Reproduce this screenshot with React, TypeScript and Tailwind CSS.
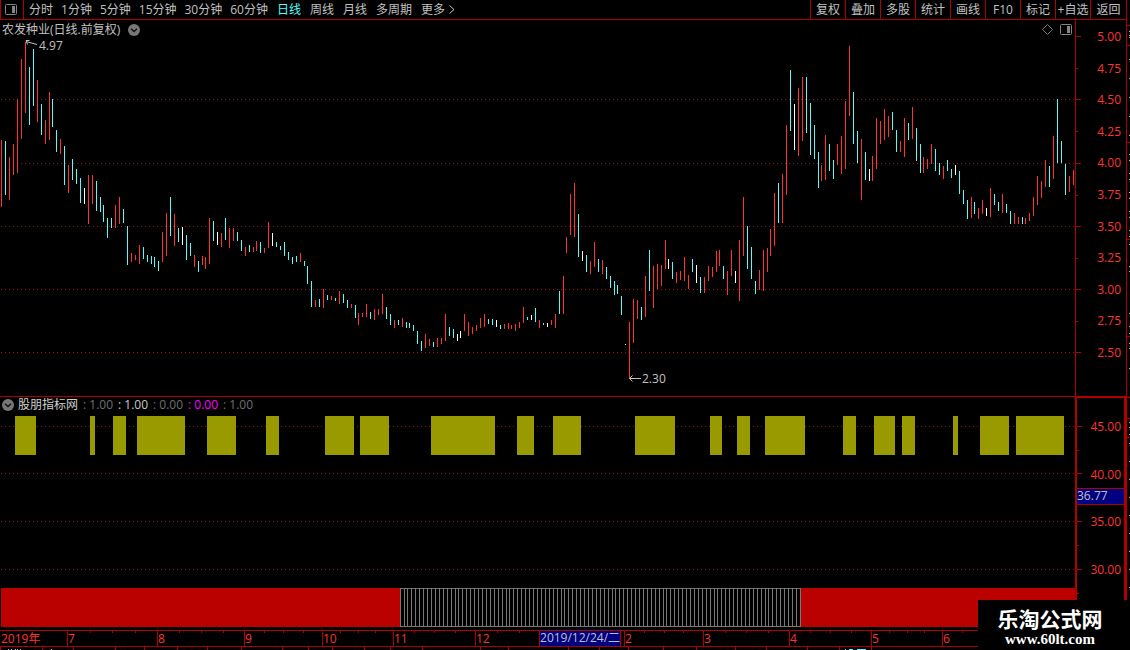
import React, { useState } from "react";
import clsx from "clsx";

type Tone = "r" | "c" | "w";

const TONES: Record<Tone, string> = { r: "#ff3232", c: "#54fcfc", w: "#ffffff" };

// x, high, low, tone
const CANDLES = `
1 140 207 r,5 141 195 c,9 157 200 r,13 144 175 r,17 99 173 r,21 59 139 r,25 42 113 r,29 67 125 c,33 49 106 c,37 80 122 r,
41 104 135 c,45 120 144 r,49 92 140 r,52 99 127 c,56 130 152 c,60 139 154 r,64 146 185 c,68 165 193 r,72 159 180 c,76 169 184 c,
80 178 203 c,84 188 204 w,88 175 224 r,92 175 204 r,96 181 211 c,100 197 212 c,103 205 222 c,107 218 238 c,111 218 228 c,115 205 228 r,
119 197 224 r,123 209 223 c,127 226 265 c,131 253 262 r,135 255 260 r,139 245 264 r,143 247 259 c,147 255 262 c,151 256 264 c,154 257 267 c,
158 261 271 c,162 232 262 r,166 213 256 r,170 197 236 c,174 214 246 r,178 228 242 c,182 227 245 w,186 235 260 c,190 243 256 c,194 255 267 r,
198 261 272 c,202 256 265 r,205 257 269 r,209 218 264 r,213 221 241 c,217 232 245 w,221 233 247 r,225 218 240 c,229 228 248 r,233 228 241 r,
237 232 241 c,241 240 251 c,245 247 256 r,249 245 252 c,253 247 252 r,256 241 251 r,260 242 253 c,264 248 253 r,268 222 248 r,272 233 246 w,
276 242 247 c,280 246 250 c,284 242 256 c,288 252 260 c,292 257 264 c,296 256 262 c,300 253 262 r,304 261 266 c,307 266 284 c,311 281 307 c,
315 300 307 r,319 299 307 c,323 289 308 r,327 295 300 c,331 296 300 r,335 298 301 c,339 291 304 r,343 294 303 c,347 300 308 c,351 304 308 r,
355 305 318 c,358 313 325 r,362 313 317 r,366 304 317 r,370 312 319 c,374 309 320 r,378 309 315 r,382 294 314 r,386 307 319 c,390 314 325 c,
394 320 328 r,398 320 325 c,402 318 327 r,406 322 328 c,409 323 328 c,413 325 331 c,417 331 344 c,421 341 351 c,425 334 348 r,429 339 346 r,
433 342 347 c,437 338 347 r,441 338 344 r,445 314 341 r,449 327 336 c,453 329 338 c,457 334 341 w,460 331 338 w,464 314 331 r,468 322 336 r,
472 327 334 r,476 325 331 r,480 318 328 r,484 314 327 r,488 319 324 c,492 319 325 c,496 320 327 w,500 325 329 c,504 324 329 r,508 323 329 r,
511 325 329 r,515 324 331 r,519 322 328 r,523 307 323 r,527 317 320 c,531 315 320 w,535 308 322 c,539 320 328 r,543 323 325 c,547 323 327 w,
551 320 325 r,555 314 328 r,559 291 314 c,563 276 314 r,566 237 253 r,570 194 235 r,574 183 237 r,578 214 257 c,582 251 261 w,586 255 272 c,
590 261 274 r,594 242 267 r,598 259 272 c,602 260 274 r,606 267 279 c,610 276 288 c,614 281 295 c,617 285 294 c,621 296 315 c,625 344 345 w,
629 322 378 r,633 299 343 r,637 300 319 r,641 307 320 c,645 276 317 r,649 250 291 c,653 266 308 r,657 264 289 r,661 265 286 r,665 240 269 r,
668 259 269 w,672 262 279 c,676 272 283 r,680 271 280 r,684 257 281 r,688 275 289 r,692 259 272 c,696 265 283 w,700 277 293 c,704 277 293 r,
708 266 281 r,712 267 277 r,716 251 272 r,719 250 266 r,723 266 279 c,727 271 295 r,731 250 276 r,735 271 283 w,739 240 301 r,743 197 256 r,
747 226 269 c,751 247 279 c,755 281 294 c,759 270 290 r,763 250 291 r,767 248 272 r,770 229 256 r,774 193 246 r,778 183 223 c,782 174 223 r,
786 125 195 r,790 70 131 c,794 104 150 w,798 88 156 r,802 77 141 r,806 77 133 c,810 103 155 c,814 125 159 c,818 152 188 c,821 165 181 r,
825 135 180 r,829 144 171 c,833 160 179 c,837 144 165 r,841 136 174 r,845 101 169 r,849 46 116 r,853 92 144 c,857 131 163 c,861 139 200 r,
865 152 180 c,869 169 181 w,872 156 181 r,876 118 169 r,880 121 144 r,884 109 140 r,888 116 137 r,892 112 130 c,896 130 152 c,900 141 152 r,
904 118 157 r,908 123 140 c,912 107 139 r,916 128 161 c,920 144 173 c,923 157 173 r,927 159 169 r,931 144 164 r,935 149 171 c,939 163 175 c,
943 166 179 r,947 160 171 c,951 169 178 c,955 165 175 w,959 171 194 c,963 190 204 c,967 200 219 c,971 197 218 r,974 202 214 c,978 208 219 r,
982 200 214 r,986 208 216 w,990 188 217 r,994 194 205 c,998 202 211 c,1002 194 213 r,1006 204 213 c,1010 211 224 c,1014 213 224 r,1018 217 224 r,
1022 217 224 c,1025 218 224 r,1029 213 221 r,1033 197 216 r,1037 176 205 r,1041 181 198 r,1045 160 187 r,1049 166 187 c,1053 136 179 r,1057 99 163 c,
1061 141 163 c,1065 164 195 c,1069 176 192 r,1073 170 185 r`
  .trim()
  .split(",")
  .map((row) => {
    const [x, high, low, tone] = row.trim().split(" ");
    return { x: +x, high: +high, low: +low, tone: tone as Tone };
  });

// start, end
const SIGNALS = [
  [15, 36], [90, 95], [113, 126], [137, 185], [207, 236], [266, 279], [325, 354],
  [360, 389], [431, 495], [517, 534], [553, 581], [635, 675], [710, 722], [737, 750],
  [765, 805], [843, 856], [874, 895], [902, 915], [953, 958], [980, 1009], [1016, 1064],
];

const MINUTE_TABS = ["分时", "1分钟", "5分钟", "15分钟", "30分钟", "60分钟"];
const PERIOD_TABS = ["日线", "周线", "月线", "多周期", "更多"];
const TOOLS = ["复权", "叠加", "多股", "统计", "画线", "F10", "标记", "+自选"];

const PRICES = ["5.00", "4.75", "4.50", "4.25", "4.00", "3.75", "3.50", "3.25", "3.00", "2.75", "2.50"];
const PRICE_MAJOR = [36, 99, 163, 226, 289, 352];
const PRICE_MINOR = [68, 131, 195, 258, 321];
const LEVELS = ["45.00", "40.00", "35.00", "30.00"];
const LEVEL_MAJOR = [426, 473, 521, 569];
const LEVEL_MINOR = [450, 545, 593];

const VALUES = [
  { text: "1.00", color: "text-[#707070]" },
  { text: "1.00", color: "text-[#c8c8c8]" },
  { text: "0.00", color: "text-[#707070]" },
  { text: "0.00", color: "text-[#ff00ff]" },
  { text: "1.00", color: "text-[#707070]" },
];

const AXIS_WIDTH = 1126;
const MONTHS = [
  { label: "2019年", width: 67 },
  { label: "7", width: 90 },
  { label: "8", width: 87 },
  { label: "9", width: 78 },
  { label: "10", width: 71 },
  { label: "11", width: 82 },
  { label: "12", width: 149 },
  { label: "2", width: 79 },
  { label: "3", width: 86 },
  { label: "4", width: 82 },
  { label: "5", width: 71 },
  { label: "6", width: 184 },
];
const WEEK_TICKS = [
  90, 112, 135, 179, 201, 223, 264, 283, 303, 340, 358, 375, 414, 434, 455, 497, 519,
  644, 664, 683, 725, 746, 768, 810, 830, 851, 889, 907, 924, 962,
];
const FOOT_TICKS = [
  0, 42, 73, 115, 144, 177, 207, 241, 282, 308, 332, 364, 390, 422, 480, 508, 568, 599,
  628, 663, 696, 735, 766, 807, 839, 871,
];

const EDGE_LINES = [25, 45, 142, 239, 336, 397, 418, 437];
const EDGE_DOTS = [
  31, 35, 37, 59, 78, 97, 116, 135, 154, 160, 173, 179, 192, 198, 211, 217, 230, 236, 244,
  266, 271, 313, 326, 333, 343, 348, 368, 422, 427, 434, 443, 461, 479, 497, 515, 533,
  551, 569, 587,
];

function PanelIcon() {
  return (
    <svg className="shrink-0" width="12" height="11" viewBox="0 0 12 11" aria-hidden="true">
      <rect x="0.5" y="0.5" width="11" height="10" rx="1" fill="none" stroke="#858585" />
      <rect x="7" y="2" width="3" height="7" fill="#858585" />
    </svg>
  );
}

function RoundChevron() {
  return (
    <svg width="12" height="12" viewBox="0 0 12 12" aria-hidden="true">
      <circle cx="6" cy="6" r="6" fill="#777777" />
      <path d="M3 4.8 6 7.6 9 4.8" fill="none" stroke="#101010" strokeWidth="1.4" />
    </svg>
  );
}

function GridLine({ y }: { y: number }) {
  return <line x1="1" x2="1075" y1={y + 0.5} y2={y + 0.5} stroke="#a01010" strokeDasharray="1 3" />;
}

function AxisTicks({ major, minor, top, height }: { major: number[]; minor: number[]; top: number; height: number }) {
  return (
    <svg
      className="w-[5px] shrink-0"
      height={height}
      viewBox={`0 ${top} 5 ${height}`}
      shapeRendering="crispEdges"
      fill="#b00000"
      aria-hidden="true"
    >
      {major.map((y) => <rect key={y} x="0" y={y} width="5" height="1" />)}
      {minor.map((y) => <rect key={y} x="0" y={y} width="2" height="1" />)}
    </svg>
  );
}

function Header() {
  const [active, setActive] = useState("日线");

  const tab = (label: string) => (
    <button
      key={label}
      onClick={() => setActive(label)}
      className={clsx("whitespace-nowrap", active === label ? "text-[#54fcfc]" : "text-[#c0c0c0]")}
    >
      {label}
    </button>
  );

  return (
    <header className="flex h-5 border-b border-l border-[#b00000]">
      <button aria-label="侧栏" className="flex w-[23px] items-center justify-center border-r border-[#b00000] pr-0.5">
        <PanelIcon />
      </button>
      <nav className="flex flex-1 items-center pl-[5px]">
        <div className="flex gap-2">{MINUTE_TABS.map(tab)}</div>
        <div className="ml-[9px] flex items-center gap-[9px]">{PERIOD_TABS.map(tab)}</div>
        <svg className="ml-1" width="6" height="9" viewBox="0 0 6 9" aria-hidden="true">
          <path d="M0.5 0.5 5 4.5 0.5 8.5" fill="none" stroke="#c0c0c0" />
        </svg>
      </nav>
      <div className="flex">
        {TOOLS.map((label) => (
          <button key={label} className="w-[35px] border-l border-[#b00000] whitespace-nowrap">
            {label}
          </button>
        ))}
        <button className="w-9 border-l border-[#b00000]">返回</button>
      </div>
    </header>
  );
}

function PriceChart() {
  return (
    <section className="flex border-b border-[#b00000]">
      <div className="min-w-0 flex-1">
        <div className="flex h-5 items-center pr-[3px] pb-px pl-0.5">
          <h1>农发种业(日线.前复权)</h1>
          <button aria-label="展开" className="ml-2"><RoundChevron /></button>
          <div className="ml-auto flex items-center gap-[7px]">
            <svg width="11" height="11" viewBox="0 0 11 11" aria-hidden="true">
              <path d="M5.5 0.5 10.5 5.5 5.5 10.5 0.5 5.5Z" fill="none" stroke="#777777" />
            </svg>
            <button aria-label="面板"><PanelIcon /></button>
          </div>
        </div>
        <svg className="block h-[356px] w-full overflow-visible" viewBox="0 40 1075 356" preserveAspectRatio="none">
          <g shapeRendering="crispEdges">
            {PRICE_MAJOR.slice(1).map((y) => <GridLine key={y} y={y} />)}
            {CANDLES.map((c) => (
              <rect key={c.x} x={c.x} y={c.high} width="1" height={c.low - c.high} fill={TONES[c.tone]} />
            ))}
          </g>
          <g fill="none" stroke="#c0c0c0">
            <path d="M26 41.5 37 44.5M29.5 40.5H26L27.5 44.5" />
            <path d="M629 378.5H641M632.5 375.5 629.5 378.5 632.5 381.5" />
          </g>
          <g fill="#c0c0c0" fontSize="12">
            <text x="39" y="50">4.97</text>
            <text x="642" y="383">2.30</text>
          </g>
        </svg>
      </div>
      <div className="flex w-[51px] border-l border-[#b00000]">
        <AxisTicks major={PRICE_MAJOR} minor={PRICE_MINOR} top={20} height={376} />
        <div className="mt-[9px] flex h-[332px] flex-1 flex-col justify-between pr-[5px] text-right text-[#ff3232]">
          {PRICES.map((p) => <span key={p}>{p}</span>)}
        </div>
      </div>
    </section>
  );
}

function IndicatorChart() {
  const dividers = CANDLES.filter((c) => c.x >= 402 && c.x <= 802).map((c) => c.x - 2);

  return (
    <section className="flex border-b border-[#b00000]">
      <div className="min-w-0 flex-1">
        <div className="flex h-[19px] items-center pb-[3px] pl-0.5">
          <button aria-label="指标"><RoundChevron /></button>
          <h2 className="ml-1 text-[#d0d0d0]">股朋指标网</h2>
          <div className="ml-[5px] flex gap-[5px]">
            {VALUES.map((v, i) => (
              <span key={i} className={clsx("flex w-[30px] justify-between", v.color)}>
                <span>:</span>
                <span>{v.text}</span>
              </span>
            ))}
          </div>
        </div>
        <svg
          className="block h-[214px] w-full"
          viewBox="0 416 1075 214"
          preserveAspectRatio="none"
          shapeRendering="crispEdges"
        >
          {LEVEL_MAJOR.map((y) => <GridLine key={y} y={y} />)}
          {SIGNALS.map(([from, to]) => (
            <rect key={from} x={from} y="416" width={to - from} height="39" fill="#999900" />
          ))}
          <g fill="#bb0000">
            <rect x="1" y="588" width="399" height="39" />
            <rect x="801" y="588" width="274" height="39" />
          </g>
          <g fill="#777777">
            <rect x="400" y="588" width="401" height="1" />
            <rect x="400" y="626" width="401" height="1" />
            {dividers.map((x) => <rect key={x} x={x} y="588" width="1" height="39" />)}
          </g>
        </svg>
      </div>
      <div className="relative -mt-px flex w-[51px] border-2 border-b-0 border-[#b00000]">
        <AxisTicks major={LEVEL_MAJOR} minor={LEVEL_MINOR} top={398} height={232} />
        <div className="mt-[21px] flex h-[159px] flex-1 flex-col justify-between pr-[3px] text-right text-[#ff3232]">
          {LEVELS.map((l) => <span key={l}>{l}</span>)}
        </div>
        <div className="absolute inset-x-0 top-[90px] h-[17px] border-y border-[#b00000] bg-[#000080] leading-[14px]">
          36.77
        </div>
      </div>
    </section>
  );
}

function DateAxis() {
  return (
    <footer>
      <div className="relative flex h-4 border-b border-[#b00000] text-[#ff3232]">
        <svg className="absolute inset-0 h-full w-full" viewBox="0 0 1126 15" preserveAspectRatio="none" fill="#b00000" shapeRendering="crispEdges">
          {WEEK_TICKS.map((x) => <rect key={x} x={x} y="0" width="1" height="2" />)}
        </svg>
        {MONTHS.map((m, i) => (
          <span
            key={m.label}
            className={clsx("shrink-0 border-[#b00000] leading-[15px]", i > 0 ? "border-l" : "pl-px")}
            style={{ width: `${(m.width / AXIS_WIDTH) * 100}%` }}
          >
            {m.label}
          </span>
        ))}
        <span className="absolute top-0 left-[47.87%] h-[15px] border-x border-[#b00000] bg-[#000080] leading-[14px] whitespace-nowrap text-[#c0c0c0]">
          2019/12/24/二
        </span>
      </div>
      <svg className="block h-[3px] w-full" viewBox="0 0 1126 3" preserveAspectRatio="none" shapeRendering="crispEdges">
        <g fill="#b00000">
          {FOOT_TICKS.map((x) => <rect key={x} x={x} y="0" width="1" height="3" />)}
        </g>
        <g fill="#c0c0c0">
          {[8, 11, 15, 17, 20, 51].map((x) => <rect key={x} x={x} y="2" width="1" height="1" />)}
        </g>
        <g fill="#54fcfc">
          <rect x="845" y="2" width="1" height="1" />
          <rect x="849" y="2" width="4" height="1" />
          <rect x="857" y="2" width="9" height="1" />
        </g>
      </svg>
    </footer>
  );
}

export default function App() {
  return (
    <div className="relative flex min-h-screen overflow-hidden bg-black font-['Open_Sans','Noto_Sans_CJK_SC',sans-serif] text-xs text-[#c0c0c0]">
      <main className="min-w-0 flex-1">
        <Header />
        <PriceChart />
        <IndicatorChart />
        <DateAxis />
      </main>
      <aside className="w-1 border-l border-[#b00000]">
        <svg className="block" width="3" height="600" viewBox="0 0 3 600" shapeRendering="crispEdges">
          {EDGE_LINES.map((y) => <rect key={y} x="0" y={y} width="3" height="1" fill="#b00000" />)}
          {EDGE_DOTS.map((y) => <rect key={y} x="2" y={y} width="1" height="1" fill="#c0c0c0" />)}
        </svg>
      </aside>
      <div className="absolute right-0 bottom-0 flex h-[50px] w-[152px] flex-col items-center bg-black pt-2 pr-2 font-bold text-white">
        <span className="text-[21px] leading-[22px]">乐淘公式网</span>
        <a href="#" className="font-['Liberation_Serif',serif] text-[15px] leading-[18px]">www.60lt.com</a>
      </div>
    </div>
  );
}
